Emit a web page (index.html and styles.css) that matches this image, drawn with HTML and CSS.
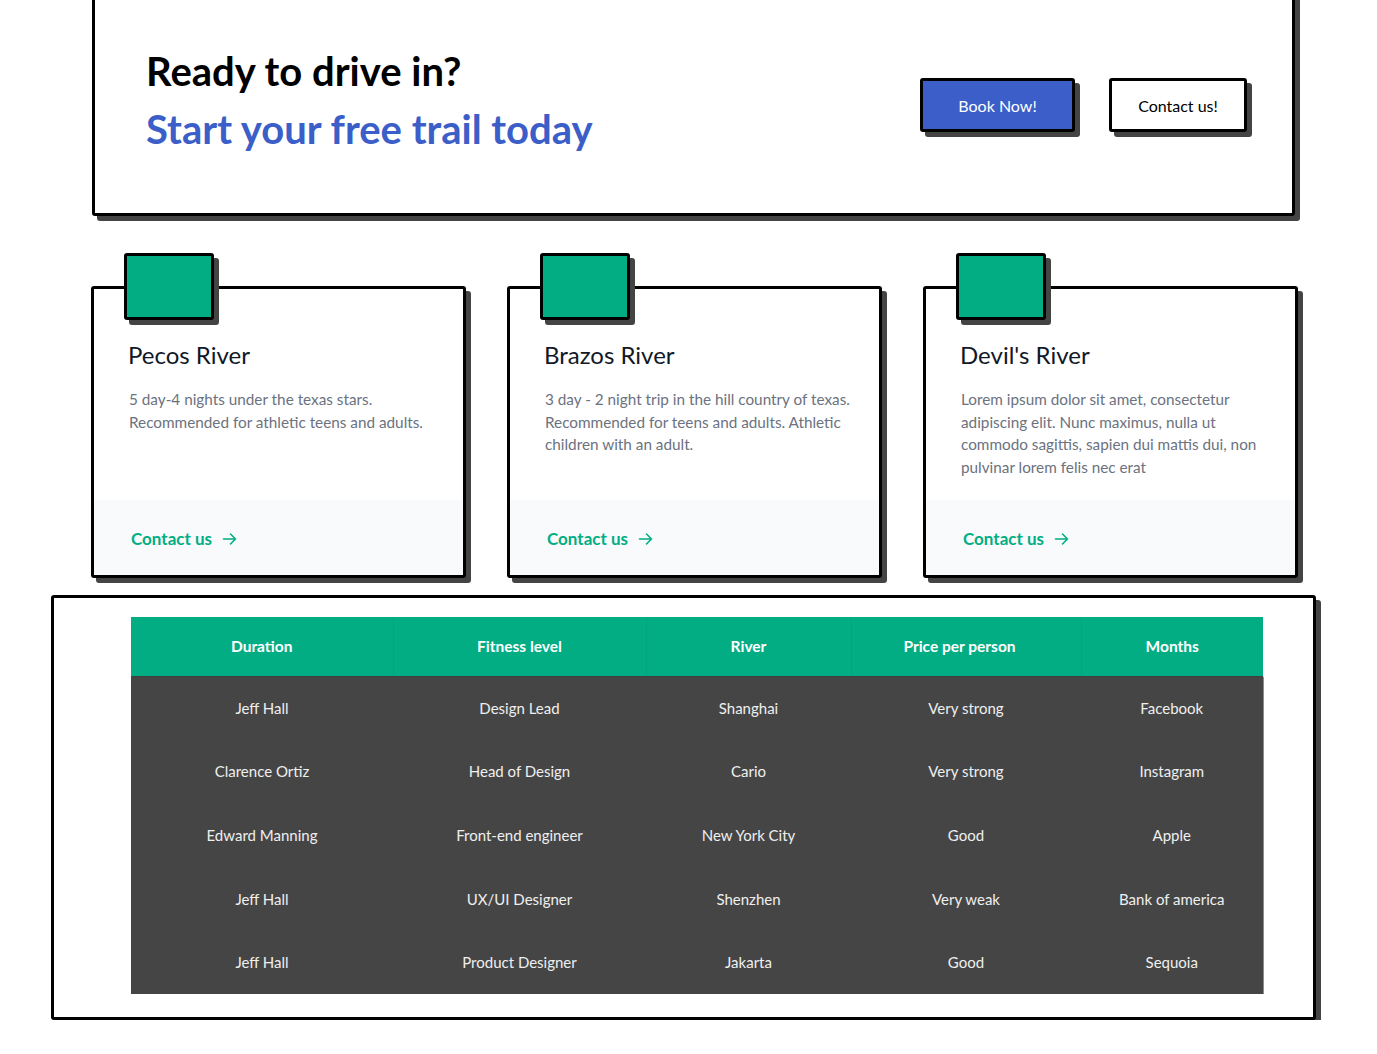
FILE: index.html
```html
<!DOCTYPE html>
<html lang="en">
<head>
<meta charset="utf-8">
<title>Ready to drive in?</title>
<link rel="stylesheet" href="styles.css">
</head>
<body>
<section class="cta">
  <h2 class="cta-title">
    <span class="cta-line">Ready to drive in?</span>
    <span class="cta-line cta-accent">Start your free trail today</span>
  </h2>
  <div class="cta-actions">
    <a class="btn btn-primary" href="#">Book Now!</a>
    <a class="btn btn-secondary" href="#">Contact us!</a>
  </div>
</section>

<section class="cards">
  <article class="card">
    <div class="card-badge"></div>
    <div class="card-body">
      <h3 class="card-title">Pecos River</h3>
      <p class="card-text">5 day-4 nights under the texas stars.<br>Recommended for athletic teens and adults.</p>
    </div>
    <div class="card-foot">
      <a class="card-link" href="#">Contact us
        <svg class="arrow" width="15" height="14" viewBox="0 0 15 14" fill="none" stroke="currentColor" stroke-width="1.6" stroke-linecap="round" stroke-linejoin="round"><path d="M1.5 7h12M8.5 2l5 5-5 5"/></svg>
      </a>
    </div>
  </article>
  <article class="card">
    <div class="card-badge"></div>
    <div class="card-body">
      <h3 class="card-title">Brazos River</h3>
      <p class="card-text">3 day - 2 night trip in the hill country of texas.<br>Recommended for teens and adults. Athletic<br>children with an adult.</p>
    </div>
    <div class="card-foot">
      <a class="card-link" href="#">Contact us
        <svg class="arrow" width="15" height="14" viewBox="0 0 15 14" fill="none" stroke="currentColor" stroke-width="1.6" stroke-linecap="round" stroke-linejoin="round"><path d="M1.5 7h12M8.5 2l5 5-5 5"/></svg>
      </a>
    </div>
  </article>
  <article class="card">
    <div class="card-badge"></div>
    <div class="card-body">
      <h3 class="card-title">Devil's River</h3>
      <p class="card-text">Lorem ipsum dolor sit amet, consectetur<br>adipiscing elit. Nunc maximus, nulla ut<br>commodo sagittis, sapien dui mattis dui, non<br>pulvinar lorem felis nec erat</p>
    </div>
    <div class="card-foot">
      <a class="card-link" href="#">Contact us
        <svg class="arrow" width="15" height="14" viewBox="0 0 15 14" fill="none" stroke="currentColor" stroke-width="1.6" stroke-linecap="round" stroke-linejoin="round"><path d="M1.5 7h12M8.5 2l5 5-5 5"/></svg>
      </a>
    </div>
  </article>
</section>

<section class="table-box">
  <table class="trips">
    <colgroup>
      <col class="c1"><col class="c2"><col class="c3"><col class="c4"><col class="c5">
    </colgroup>
    <thead>
      <tr><th>Duration</th><th>Fitness level</th><th>River</th><th class="price-head">Price per person</th><th>Months</th></tr>
    </thead>
    <tbody>
      <tr><td>Jeff Hall</td><td>Design Lead</td><td>Shanghai</td><td>Very strong</td><td>Facebook</td></tr>
      <tr><td>Clarence Ortiz</td><td>Head of Design</td><td>Cario</td><td>Very strong</td><td>Instagram</td></tr>
      <tr><td>Edward Manning</td><td>Front-end engineer</td><td>New York City</td><td>Good</td><td>Apple</td></tr>
      <tr><td>Jeff Hall</td><td>UX/UI Designer</td><td>Shenzhen</td><td>Very weak</td><td>Bank of america</td></tr>
      <tr><td>Jeff Hall</td><td>Product Designer</td><td>Jakarta</td><td>Good</td><td>Sequoia</td></tr>
    </tbody>
  </table>
</section>
</body>
</html>
```

FILE: styles.css
```css
* { box-sizing: border-box; }

body {
  margin: 0;
  background: #ffffff;
  font-family: "Lato", "Noto Sans", Arial, sans-serif;
  color: #111827;
}

/* CTA */
.cta {
  margin: -30px 0 0 92px;
  width: 1203px;
  border: 3px solid #000;
  border-radius: 3px;
  box-shadow: 5px 5px 0 #444;
  background: #fff;
  padding: 69px 45px 55px 51px;
  display: flex;
  align-items: center;
  justify-content: space-between;
}

.cta-title {
  margin: 0;
  font-size: 40px;
  font-weight: 700;
  line-height: 58px;
  letter-spacing: 0;
}

.cta-line { display: block; color: #000; }
.cta-accent { color: #3b5ec8; }

.cta-actions {
  display: flex;
  gap: 34px;
  margin-top: 10px;
}

.btn {
  display: inline-flex;
  align-items: center;
  justify-content: center;
  height: 54px;
  border: 3px solid #000;
  border-radius: 3px;
  box-shadow: 5px 5px 0 #444;
  font-size: 16px;
  text-decoration: none;
}

.btn-primary {
  width: 155px;
  background: #3b5ec8;
  color: #fff;
}

.btn-secondary {
  width: 138px;
  background: #fff;
  color: #000;
}

/* Cards */
.cards {
  margin: 70px 0 0 91px;
  width: 1206px;
  display: grid;
  grid-template-columns: 375px 375px 375px;
  column-gap: 41px;
}

.card {
  position: relative;
  display: flex;
  flex-direction: column;
  height: 292px;
  border: 3px solid #000;
  border-radius: 3px;
  box-shadow: 5px 5px 0 #444;
  background: #fff;
}

.card-badge {
  position: absolute;
  top: -36px;
  left: 30px;
  width: 90px;
  height: 67px;
  background: #02ad84;
  border: 3px solid #000;
  border-radius: 3px;
  box-shadow: 5px 5px 0 #444;
}

.card-body {
  flex: 1;
  padding: 50px 8px 0 34px;
}

.card-title {
  margin: 0;
  font-size: 24px;
  font-weight: 400;
  line-height: 32px;
  color: #111827;
}

.card-text {
  margin: 17px 0 0 1px;
  font-size: 15.3px;
  line-height: 22.5px;
  color: #6b7280;
  white-space: nowrap;
}

.card-foot {
  height: 75px;
  background: #f9fafb;
  padding: 27px 0 0 37px;
}

.card-link {
  display: inline-flex;
  align-items: center;
  gap: 10px;
  font-size: 17px;
  font-weight: 700;
  line-height: 24px;
  color: #02ad84;
  text-decoration: none;
}

.arrow { display: block; }

/* Table */
.table-box {
  margin: 17px 0 0 51px;
  width: 1265px;
  border: 3px solid #000;
  border-radius: 3px;
  box-shadow: 5px 5px 0 #444;
  background: #fff;
  padding: 19px 50px 23px 77px;
}

.trips {
  width: 1132px;
  border-collapse: collapse;
  table-layout: fixed;
  font-size: 15px;
}

.c1 { width: 262px; }
.c2 { width: 253px; }
.c3 { width: 205px; }
.c4 { width: 230px; }
.c5 { width: 182px; }

.trips th {
  height: 59px;
  padding: 0;
  background: #02ad84;
  color: #fff;
  font-size: 15.5px;
  font-weight: 700;
  text-align: center;
  border-left: 1px solid rgba(0, 0, 0, 0.04);
  border-bottom: 1px solid rgba(0, 0, 0, 0.06);
}

.trips th:first-child { border-left: 0; }

.trips th.price-head { padding-right: 13px; }

.trips td {
  height: 63.6px;
  padding: 0;
  background: #454545;
  color: #efefef;
  text-align: center;
  line-height: 20px;
}

.trips td:last-child { border-right: 1px solid #8c8c8c; }
```
